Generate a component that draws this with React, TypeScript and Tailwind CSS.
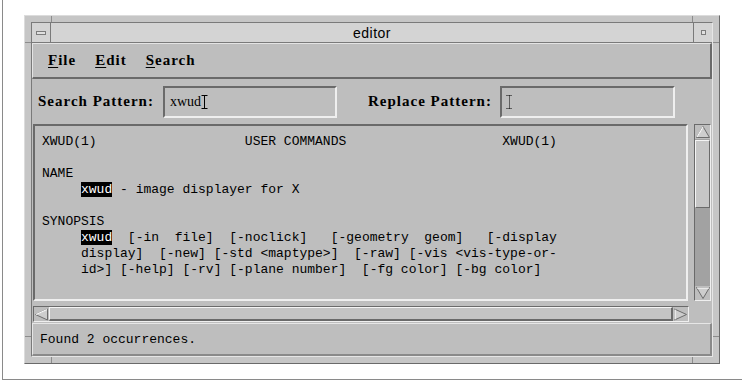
import React from "react";

const DARK = "#6c6c6c";

function IBeam({ dotted }: { dotted?: boolean }) {
  return (
    <svg width="7" height="14" viewBox="0 0 7 14" className="shrink-0">
      <g stroke="#000" strokeWidth="1" strokeDasharray={dotted ? "1 1" : undefined} fill="none">
        <line x1="0.5" y1="0.5" x2="6.5" y2="0.5" />
        <line x1="3.5" y1="0.5" x2="3.5" y2="13.5" />
        <line x1="0.5" y1="13.5" x2="6.5" y2="13.5" />
      </g>
    </svg>
  );
}

function Arrow({ dir }: { dir: "up" | "down" | "left" | "right" }) {
  const pts: Record<string, string> = {
    up: "8,1.5 14.5,12.5 1.5,12.5",
    down: "1.5,1.5 14.5,1.5 8,12.5",
    left: "1.5,6.5 13.5,1 13.5,12",
    right: "1.5,1 13.5,6.5 1.5,12",
  };
  const w = dir === "up" || dir === "down" ? 16 : 15;
  const h = dir === "up" || dir === "down" ? 14 : 13;
  return (
    <svg width={w} height={h} viewBox={`0 0 ${w} ${h}`} className="shrink-0 block">
      <polygon points={pts[dir]} fill="#cdcdcd" stroke={DARK} strokeWidth="1" />
      {dir === "up" && <line x1="8" y1="2" x2="2" y2="12" stroke="#fafafa" strokeWidth="1.2" />}
      {dir === "down" && <line x1="2" y1="2" x2="14" y2="2" stroke="#fafafa" strokeWidth="1.2" />}
      {dir === "left" && <line x1="2" y1="6.5" x2="13" y2="1.5" stroke="#fafafa" strokeWidth="1.2" />}
      {dir === "right" && <line x1="2" y1="1.5" x2="2" y2="11.5" stroke="#fafafa" strokeWidth="1.2" />}
    </svg>
  );
}

function Hi({ children }: { children: React.ReactNode }) {
  return <span className="bg-black text-white">{children}</span>;
}

export default function App() {
  const serifBold = "font-['Liberation_Serif',serif] font-bold text-[15px] tracking-[1px] text-black";
  return (
    <div className="w-[742px] h-[382px] bg-white overflow-hidden">
      <div className="ml-[2px] w-[740px] h-[380px] border-l border-b border-[#8a8a8a] pt-[15px] pl-[21px]">
        {/* window frame */}
        <div className="relative w-[696px] h-[349px] bg-[#c6c6c6] border border-t-[#dcdcdc] border-l-[#dcdcdc] border-b-[#6a6a6a] border-r-[#6a6a6a] p-[6px]">
          {/* frame corner separators */}
          <div className="absolute left-[26px] top-0 w-px h-[6px] bg-[#8c8c8c]" />
          <div className="absolute right-[26px] top-0 w-px h-[6px] bg-[#8c8c8c]" />
          <div className="absolute left-[26px] bottom-0 w-px h-[6px] bg-[#8c8c8c]" />
          <div className="absolute right-[26px] bottom-0 w-px h-[6px] bg-[#8c8c8c]" />
          <div className="absolute left-0 top-[26px] w-[6px] h-px bg-[#8c8c8c]" />
          <div className="absolute right-0 top-[26px] w-[6px] h-px bg-[#8c8c8c]" />
          <div className="absolute left-0 bottom-[26px] w-[6px] h-px bg-[#8c8c8c]" />
          <div className="absolute right-0 bottom-[26px] w-[6px] h-px bg-[#8c8c8c]" />

          <div className="w-full h-full border border-t-[#7a7a7a] border-l-[#7a7a7a] border-b-[#e6e6e6] border-r-[#e6e6e6] flex flex-col bg-[#bebebe]">
            {/* title bar */}
            <div className="h-[20px] shrink-0 flex bg-[#d4d4d4] border-b border-[#7a7a7a]">
              <div className="w-[19px] border-r border-[#7a7a7a] flex items-center justify-center">
                <div className="w-[10px] h-[4px] bg-[#e0e0e0] border border-[#7c7c7c]" />
              </div>
              <div className="flex-1 flex items-center justify-center font-['Liberation_Sans',sans-serif] text-[14px] tracking-[0.5px] text-black leading-none">
                editor
              </div>
              <div className="w-[19px] border-l border-[#7a7a7a] flex items-center justify-center">
                <div className="w-[5px] h-[5px] bg-[#e0e0e0] border border-[#7c7c7c]" />
              </div>
            </div>

            {/* menu bar */}
            <div className="h-[36px] shrink-0 flex items-center gap-[19px] pl-[15px] bg-[#bebebe] border-t border-l border-t-[#e4e4e4] border-l-[#e4e4e4] border-b-2 border-r-2 border-b-[#6a6a6a] border-r-[#6a6a6a]">
              <span className={serifBold}><span className="underline underline-offset-2">F</span>ile</span>
              <span className={serifBold}><span className="underline underline-offset-2">E</span>dit</span>
              <span className={serifBold}><span className="underline underline-offset-2">S</span>earch</span>
            </div>

            {/* search row */}
            <div className="h-[45px] shrink-0 flex items-center pl-[6px]">
              <span className={serifBold + " w-[125px]"}>Search Pattern:</span>
              <div className="w-[174px] h-[32px] flex items-center pl-[5px] border-t-2 border-l-2 border-t-[#6a6a6a] border-l-[#6a6a6a] border-b-2 border-r-2 border-b-[#efefef] border-r-[#efefef]">
                <span className="font-['Liberation_Serif',serif] text-[14px] text-black leading-none">xwud</span>
                <IBeam />
              </div>
              <span className={serifBold + " ml-[31px] w-[132px]"}>Replace Pattern:</span>
              <div className="w-[175px] h-[32px] flex items-center pl-[4px] border-t-2 border-l-2 border-t-[#6a6a6a] border-l-[#6a6a6a] border-b-2 border-r-2 border-b-[#efefef] border-r-[#efefef]">
                <IBeam dotted />
              </div>
            </div>

            {/* text area + vertical scrollbar */}
            <div className="h-[177px] shrink-0 flex pl-[1px]">
              <div className="w-[655px] h-full border-t-2 border-l-2 border-t-[#6a6a6a] border-l-[#6a6a6a] border-b-2 border-r-2 border-b-[#efefef] border-r-[#efefef] pl-[7px] pt-[8px] overflow-hidden">
                <pre className="font-['Liberation_Mono',monospace] text-[13px] leading-[16px] text-black m-0">
{`XWUD(1)                   USER COMMANDS                    XWUD(1)

NAME
     `}<Hi>xwud</Hi>{` - image displayer for X

SYNOPSIS
     `}<Hi>xwud</Hi>{`  [-in  file]  [-noclick]   [-geometry  geom]   [-display
     display]  [-new] [-std <maptype>]  [-raw] [-vis <vis-type-or-
     id>] [-help] [-rv] [-plane number]  [-fg color] [-bg color]`}
                </pre>
              </div>
              <div className="ml-[6px] w-[17px] h-full flex flex-col bg-[#a2a2a2] border border-t-[#6a6a6a] border-l-[#6a6a6a] border-b-[#efefef] border-r-[#efefef]">
                <div className="h-[14px] bg-[#bebebe] flex items-center justify-center">
                  <Arrow dir="up" />
                </div>
                <div className="mt-[1px] h-[68px] bg-[#c6c6c6] border border-t-[#f4f4f4] border-l-[#f4f4f4] border-b-[#6a6a6a] border-r-[#6a6a6a]" />
                <div className="flex-1" />
                <div className="h-[14px] bg-[#bebebe] flex items-center justify-center">
                  <Arrow dir="down" />
                </div>
              </div>
            </div>

            {/* horizontal scrollbar */}
            <div className="mt-[5px] ml-[1px] w-[656px] h-[16px] shrink-0 flex items-center bg-[#a2a2a2] border border-t-[#6a6a6a] border-l-[#6a6a6a] border-b-[#efefef] border-r-[#efefef]">
              <div className="w-[15px] h-full bg-[#bebebe] flex items-center justify-center">
                <Arrow dir="left" />
              </div>
              <div className="flex-1 h-full bg-[#c4c4c4] border border-t-[#f4f4f4] border-l-[#f4f4f4] border-b-2 border-r-2 border-b-[#6a6a6a] border-r-[#6a6a6a]" />
              <div className="w-[15px] h-full bg-[#bebebe] flex items-center justify-center">
                <Arrow dir="right" />
              </div>
            </div>

            {/* status */}
            <div className="mt-[1px] flex-1 flex items-center pl-[7px] border-t border-l border-t-[#e6e6e6] border-l-[#e6e6e6] border-b-2 border-r-2 border-b-[#8a8a8a] border-r-[#8a8a8a]">
              <span className="font-['Liberation_Mono',monospace] text-[13px] text-black leading-none">Found 2 occurrences.</span>
            </div>
          </div>
        </div>
      </div>
    </div>
  );
}
